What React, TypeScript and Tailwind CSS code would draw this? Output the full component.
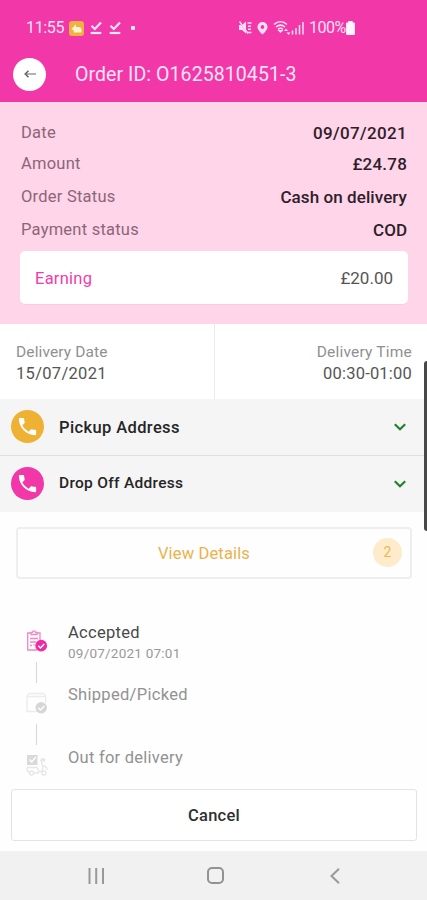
import type { ReactNode } from 'react';

function Phone() {
  return (
    <svg viewBox="0 0 24 24" className="h-[23px] w-[23px]" fill="#fff">
      <path d="M6.62 10.79c1.44 2.83 3.76 5.14 6.59 6.59l2.2-2.2c.27-.27.67-.36 1.02-.24 1.12.37 2.33.57 3.57.57.55 0 1 .45 1 1V20c0 .55-.45 1-1 1-9.39 0-17-7.61-17-17 0-.55.45-1 1-1h3.5c.55 0 1 .45 1 1 0 1.25.2 2.45.57 3.57.11.35.03.74-.25 1.02l-2.2 2.2z" />
    </svg>
  );
}

function CheckUnderline() {
  return (
    <svg viewBox="0 0 12 14" className="h-[14px] w-3" fill="none" stroke="#ffe6f6">
      <path d="M1.5 4.700 4.800 8 11 1.500" strokeWidth="2.200" />
      <path d="M.7 12h10.600" strokeWidth="2.200" />
    </svg>
  );
}

function StatusBar() {
  return (
    <div className="flex h-[54px] items-center pl-[26px] pt-[2px] text-[#ffe0f4]">
      <span className="w-[43px] text-[16px] tracking-[-0.35px]">11:55</span>
      <svg viewBox="0 0 15 15" className="h-[15px] w-[15px]">
        <rect width="15" height="15" rx="3" fill="#efb13f" />
        <path d="M2.5 8 7 3.2V6h2.5a3 3 0 0 1 3 3v2.5H4.8V9.6z" fill="#fff3d0" />
      </svg>
      <div className="ml-[6px] flex gap-[7px]">
        <CheckUnderline />
        <CheckUnderline />
      </div>
      <span className="ml-[10px] h-1 w-1 rounded-[1px] bg-[#ffe6f6]" />
      <svg viewBox="0 0 67 16" className="ml-[103px] h-4 w-[67px]" fill="#ffe0f4">
        <path d="M1 5h3l4-3.5v12L4 10H1z" />
        <path d="m1 2 9 11.5" stroke="#f237a8" strokeWidth="1" />
        <path d="m1.5 1.5 8.500 12" stroke="#ffe0f4" strokeWidth="1.300" />
        <path d="M9.500 3h4M10 6.300h3M10 9.300h3M9.500 12.500h4" stroke="#ffe0f4" strokeWidth="1.500" />
        <path fillRule="evenodd" d="M24.500 2a5 5 0 0 0-5 5c0 3.300 5 7.500 5 7.500s5-4.200 5-7.500a5 5 0 0 0-5-5m0 3.100a1.900 1.900 0 1 1 0 3.800 1.900 1.900 0 0 1 0-3.800" />
        <path d="M36 4.500c4-3.600 9-3.600 13 0M38 7c3-2.500 6-2.500 9 0M40 9.300c1.700-1.300 3.300-1.300 5 0" fill="none" stroke="#ffe0f4" strokeWidth="1.500" />
        <path d="m42.500 13-3-3h6z" />
        <path d="m48 8.500 2 2.500h-4zm2.500 6.500-2-2.500h4z" />
        <path d="M54.500 10.500v4M58 8v6.500M61.500 5v9.500M65 2v12.500" stroke="#ffe0f4" strokeWidth="1.500" fill="none" />
      </svg>
      <span className="ml-[4px] w-[37px] whitespace-nowrap text-[16px] tracking-[-0.500px]">100%</span>
      <svg viewBox="0 0 10 14" className="-ml-px mb-px h-[14px] w-[11px]" fill="#fff5fc" preserveAspectRatio="none">
        <path d="M3 0h4v1.500h1a1 1 0 0 1 1 1V13a1 1 0 0 1-1 1H2a1 1 0 0 1-1-1V2.500a1 1 0 0 1 1-1h1z" />
      </svg>
    </div>
  );
}

function SummaryRow({ label, value, h, track }: { label: string; value: string; h: string; track: string }) {
  return (
    <div className={'flex items-center justify-between pl-[21px] pr-5 ' + h}>
      <span className="text-[16.500px] tracking-[0.230px] text-[#8c6579]">{label}</span>
      <span className={'text-[17px] font-medium text-[#2e2029] ' + track}>{value}</span>
    </div>
  );
}

function AddressRow({ label, color, track }: { label: string; color: string; track: string }) {
  return (
    <div className="flex flex-1 items-center bg-[#f5f5f5] pl-[11px] pr-[21px]">
      <span className={'mb-[2px] flex h-[33px] w-[33px] items-center justify-center rounded-full ' + color}>
        <Phone />
      </span>
      <span className={'ml-[15px] flex-1 font-medium text-[#252525] ' + track}>{label}</span>
      <svg viewBox="0 0 12 8" className="mb-px h-2 w-3" fill="none" stroke="#24802d" strokeWidth="2.200">
        <path d="m.8 1.200 5.200 5 5.200-5" />
      </svg>
    </div>
  );
}

function AcceptedIcon() {
  return (
    <svg viewBox="0 0 22 24" className="h-6 w-[22px]" fill="none" stroke="#f287c4" strokeWidth="1.300">
      <path d="M5 4H1.700v17h9.500M11 4h3v7.500M5 5.500h6V3.300H9.500c0-2-3-2-3 0H5zM4 9.500h8M4 13h6M4 16.500h2m1.500 0 1-1" />
      <circle cx="15.200" cy="16.700" r="5.900" fill="#ee2ba5" stroke="none" />
      <path d="m12.300 16.800 2.100 2.100 3.900-4" stroke="#fff" strokeWidth="1.400" />
    </svg>
  );
}

function ShippedIcon() {
  return (
    <svg viewBox="0 0 22 24" className="h-6 w-[22px]" fill="none" stroke="#ececec" strokeWidth="1.300">
      <path d="M1 5.500 3 2.500h15l1.700 3V12M1 5.500h18.500M1 5.500v15h10" />
      <circle cx="15.200" cy="16.700" r="5.700" fill="#d6d6d6" stroke="none" />
      <path d="m12.300 16.800 2.100 2.100 3.900-4" stroke="#fff" strokeWidth="1.400" />
    </svg>
  );
}

function DeliveryIcon() {
  return (
    <svg viewBox="0 0 22 24" className="h-6 w-[22px]" fill="none" stroke="#e6e6e6" strokeWidth="1.300">
      <rect x="1" y="2" width="10.500" height="10" fill="#d9d9d9" stroke="none" />
      <path d="m3.500 6.500 2.300 2.500 4-5" stroke="#fff" />
      <path d="M1 14.500h10l2 4h3l1-4-2-7h3M15 6h3.500v3M1 14.500v3l2 2M8 20h5M17 13c3 0 4 2 4 4" />
      <circle cx="5.500" cy="20" r="2" />
      <circle cx="18" cy="20" r="2" />
    </svg>
  );
}

function Step({ icon, last, children }: { icon: ReactNode; last?: boolean; children: ReactNode }) {
  return (
    <div className="flex h-[62.500px]">
      <div className="flex w-[22px] flex-col items-center pt-[8px]">
        {icon}
        {!last && <span className="mr-px mt-[9px] h-[21px] w-px bg-[#d6d6d6]" />}
      </div>
      <div className="ml-5 flex flex-col">{children}</div>
    </div>
  );
}

export default function App() {
  return (
    <div className="relative flex h-[900px] w-[427px] flex-col overflow-hidden bg-[#fefefe] font-['Roboto',sans-serif]">
      <header className="h-[102px] shrink-0 bg-[#f237a8]">
        <StatusBar />
        <div className="flex h-[40px] items-center pl-[13px]">
          <span className="flex h-[33px] w-[33px] items-center justify-center rounded-full bg-white">
            <svg viewBox="0 0 12 10" className="h-[10px] w-3" fill="none" stroke="#666">
              <path d="M12 5H1.500" strokeWidth="1" />
              <path d="M4.500 1.700 1.200 5l3.300 3.300" strokeWidth="1.500" />
            </svg>
          </span>
          <h1 className="ml-[29px] pt-px text-[19.500px] leading-6 tracking-[0.080px] text-[#ffe4f5]">Order ID: O1625810451-3</h1>
        </div>
      </header>

      <section className="h-[222px] shrink-0 bg-[#fed5e9] pt-[16px]">
        <SummaryRow label="Date" value="09/07/2021" h="h-[31px]" track="tracking-[0.350px]" />
        <SummaryRow label="Amount" value="£24.78" h="h-[31px]" track="tracking-[0.200px]" />
        <SummaryRow label="Order Status" value="Cash on delivery" h="h-[35px]" track="tracking-[0.080px]" />
        <SummaryRow label="Payment status" value="COD" h="h-[31px]" track="tracking-[0px]" />
        <div className="ml-5 mr-[19px] mt-[5px] flex h-[53px] items-center justify-between rounded-[5px] bg-white pl-[15px] pr-[15px] pt-[2px] text-[16.500px] shadow-[0_1px_1px_rgba(0,0,0,0.04)]">
          <span className="pt-px tracking-[0.250px] text-[#f23cab]">Earning</span>
          <span className="text-[17px] tracking-[0px] text-[#555]">£20.00</span>
        </div>
      </section>

      <section className="flex h-[75px] shrink-0 bg-white leading-[22px]">
        <div className="flex w-[214px] flex-col pl-4 pt-[17px]">
          <span className="text-[15.500px] tracking-[0.120px] text-[#909090]">Delivery Date</span>
          <span className="text-[16.500px] tracking-[0.300px] text-[#555]">15/07/2021</span>
        </div>
        <div className="flex flex-1 flex-col items-end border-l border-[#ececec] pr-[15px] pt-[17px]">
          <span className="text-[15.500px] tracking-[0.200px] text-[#909090]">Delivery Time</span>
          <span className="text-[16.500px] tracking-[0.200px] text-[#555]">00:30-01:00</span>
        </div>
      </section>

      <section className="flex h-[113px] shrink-0 flex-col gap-px bg-[#dfdfdf]">
        <AddressRow label="Pickup Address" color="bg-[#efb134]" track="text-[16.500px] tracking-[0.380px] pt-[2px]" />
        <AddressRow label="Drop Off Address" color="bg-[#f237a8]" track="text-[15.500px] tracking-[0.300px]" />
      </section>

      <button className="mx-4 mr-[15px] mt-[15px] flex h-[52px] shrink-0 items-center rounded-[4px] border-2 border-[#eeeeef] pr-[8px]">
        <span className="flex-1 pl-[17px] pt-[2px] text-[16.500px] tracking-[0.150px] text-[#ecb14c]">View Details</span>
        <span className="mb-px flex h-[29px] w-[29px] items-center justify-center rounded-full bg-[#fdebcb] text-[14px] text-[#edb75a]">2</span>
      </button>

      <section className="mt-[42px] flex h-[168px] shrink-0 flex-col pl-[26px]">
        <Step icon={<AcceptedIcon />}>
          <span className="text-[16.500px] leading-[24px] tracking-[0.300px] text-[#484848]">Accepted</span>
          <span className="text-[13.500px] leading-[17px] tracking-[0.230px] text-[#999]">09/07/2021 07:01</span>
        </Step>
        <Step icon={<ShippedIcon />}>
          <span className="text-[16.500px] leading-[24px] tracking-[0.300px] text-[#929292]">Shipped/Picked</span>
        </Step>
        <Step icon={<DeliveryIcon />} last>
          <span className="text-[16.500px] leading-[25px] tracking-[0.250px] text-[#929292]">Out for delivery</span>
        </Step>
      </section>

      <button className="ml-[11px] mr-[10px] h-[52px] shrink-0 rounded-[3px] border-[1.500px] border-[#e4e4e4] bg-white pt-[2px] text-[16.500px] font-medium tracking-[0.250px] text-[#303030]">
        Cancel
      </button>

      <nav className="mt-auto flex h-[49px] shrink-0 items-center bg-[#f1f1f1] pl-[88px]">
        <svg viewBox="0 0 17 16" className="h-4 w-[17px]" stroke="#999" strokeWidth="2">
          <path d="M1.500 0v16M8.200 0v16M15 0v16" />
        </svg>
        <span className="ml-[102px] h-[17px] w-[17px] rounded-[5px] border-2 border-[#929292]" />
        <svg viewBox="0 0 10 16" className="ml-[106px] h-4 w-[10px]" fill="none" stroke="#999" strokeWidth="2">
          <path d="M9 .8 1.500 8 9 15.200" />
        </svg>
      </nav>

      <span className="absolute right-[-3px] top-[361px] h-[170px] w-[6px] rounded-[3px] bg-[#484848]" />
    </div>
  );
}
